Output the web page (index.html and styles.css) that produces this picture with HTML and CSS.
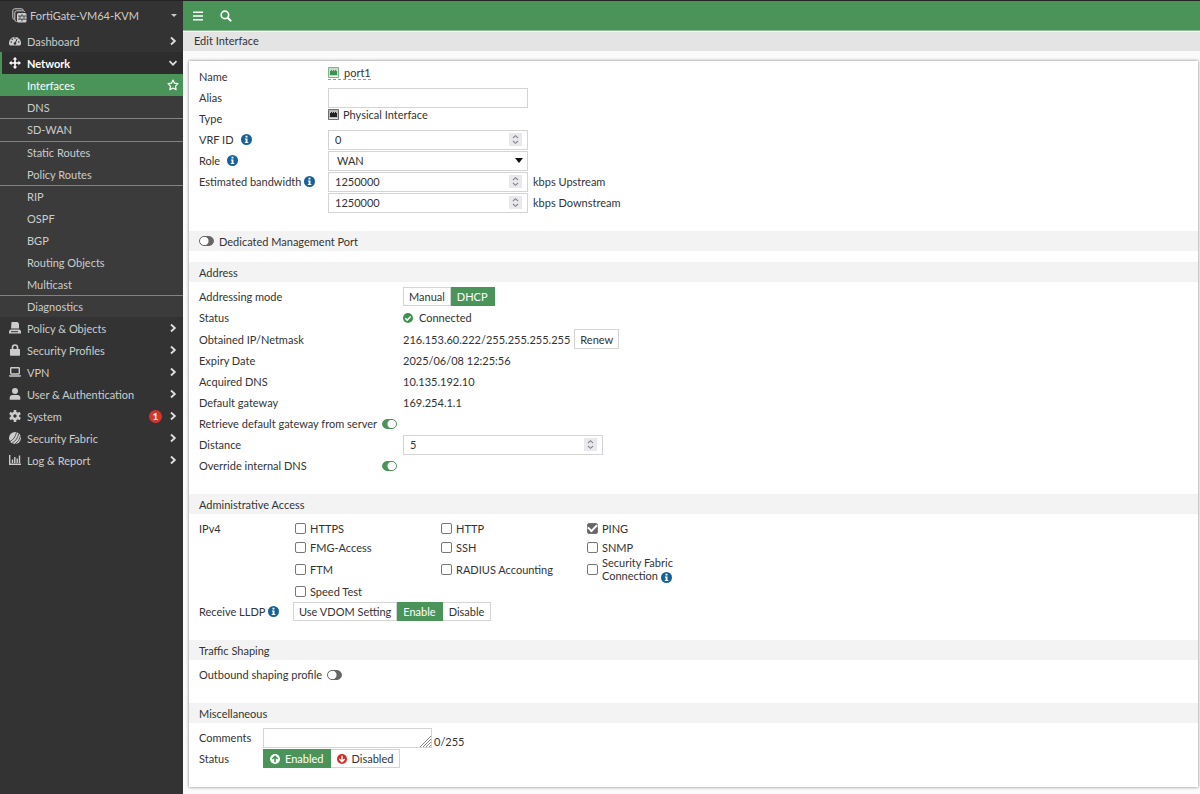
FILE: index.html
```html
<!DOCTYPE html>
<html lang="en">
<head>
<meta charset="utf-8">
<title>Edit Interface</title>
<link rel="stylesheet" href="styles.css">
</head>
<body>
<svg class="defs" aria-hidden="true">
  <symbol id="right" viewBox="0 0 10 10"><path d="M3 1.5 6.8 5 3 8.500" fill="none" stroke="currentColor" stroke-width="1.900"/></symbol>
  <symbol id="info" viewBox="0 0 10 10"><circle cx="5" cy="5" r="5" fill="#14609b"/><path d="M4.100 1.500h1.800v1.600H4.100zM3.500 4h2.400v3.200h.8v1H3.400v-1h.8V5h-.7z" fill="#fff"/></symbol>
  <symbol id="spin" viewBox="0 0 13 13"><path d="M0 0h13v13H0z" fill="#e9e9ed"/><path d="M4 5l2.500-2.300L9 5M4 8l2.500 2.300L9 8" fill="none" stroke="#85858c" stroke-width="1.100"/></symbol>
  <symbol id="port" viewBox="0 0 11 11"><path d="M.5.5h10v10H.5z" fill="currentColor" fill-opacity=".3" stroke="currentColor" stroke-opacity=".6"/><path d="M2 8V4h1V3h1v1h1V3h1v1h1V3h1v1h1v4z" fill="currentColor"/><path d="M1 9h9v1H1z" fill="#fff" fill-opacity=".6"/></symbol>
</svg>
<div class="app">
  <nav class="sidebar" aria-label="Main">
    <button class="device" type="button">
      <svg class="device-icon" viewBox="0 0 15 15" fill="none" stroke="currentColor"><path d="M2.500 11.500A2 2 0 0 1 .8 9.500V2.800a2 2 0 0 1 2-2h6.700a2 2 0 0 1 1.800 1.300"/><path d="M4.500 13.500A2 2 0 0 1 2.800 11.500V4.800a2 2 0 0 1 2-2H11a2 2 0 0 1 1.800 1"/><rect x="5" y="5" width="9.500" height="9.500" rx="1.500" fill="currentColor" stroke="none"/><path d="M6 8h8.500M6 11.200h8.500M10 6v2M8 8v3M12 8v3M10 11v2.500" stroke="#333" stroke-width=".8"/></svg>
      <span>FortiGate-VM64-KVM</span>
      <svg class="caret" viewBox="0 0 6 3"><path d="M0 0h6L3 3z" fill="currentColor"/></svg>
    </button>
    <ul class="menu">
      <li><a class="item" href="#dashboard"><svg class="ico" viewBox="0 0 12 12"><path d="M.3 9.800A6 6 0 1 1 11.700 9.800q-.2.700-1 .700H1.300q-.8 0-1-.700z" fill="currentColor"/><g fill="#333"><circle cx="2.200" cy="7" r=".8"/><circle cx="3.300" cy="4.200" r=".8"/><circle cx="6" cy="3" r=".8"/><circle cx="9.800" cy="7" r=".8"/><circle cx="6" cy="8.500" r="1.300"/></g><path d="M6 8.500 8.200 3.900" stroke="#333"/></svg><span>Dashboard</span><svg class="chev"><use href="#right"/></svg></a></li>
      <li>
        <a class="item open" href="#network"><svg class="ico" viewBox="0 0 12 12"><path d="M6 0 8.300 2.600H6.800v2.600h2.600V3.700L12 6 9.400 8.300V6.800H6.800v2.600h1.500L6 12 3.700 9.400h1.500V6.800H2.600v1.500L0 6l2.600-2.300v1.500h2.600V2.600H3.700z" fill="currentColor"/></svg><span>Network</span><svg class="chev" viewBox="0 0 10 10"><path d="M1.500 3.200 5 6.700 8.500 3.200" fill="none" stroke="currentColor" stroke-width="1.700"/></svg></a>
        <div class="submenu">
          <ul class="group">
            <li><a class="sub active" href="#interfaces"><span>Interfaces</span><svg class="star" viewBox="0 0 12 12"><path d="M6 1 7.500 4.200l3.500.5L8.500 7.200l.6 3.500L6 9 2.900 10.700l.6-3.500L1 4.700l3.500-.5z" fill="none" stroke="#fff" stroke-width="1.200" stroke-linejoin="round"/></svg></a></li>
            <li><a class="sub" href="#dns">DNS</a></li>
          </ul>
          <ul class="group"><li><a class="sub" href="#sdwan">SD-WAN</a></li></ul>
          <ul class="group">
            <li><a class="sub" href="#static">Static Routes</a></li>
            <li><a class="sub" href="#policy-routes">Policy Routes</a></li>
          </ul>
          <ul class="group">
            <li><a class="sub" href="#rip">RIP</a></li>
            <li><a class="sub" href="#ospf">OSPF</a></li>
            <li><a class="sub" href="#bgp">BGP</a></li>
            <li><a class="sub" href="#routing">Routing Objects</a></li>
            <li><a class="sub" href="#multicast">Multicast</a></li>
          </ul>
          <ul class="group"><li><a class="sub" href="#diagnostics">Diagnostics</a></li></ul>
        </div>
      </li>
      <li><a class="item" href="#policy"><svg class="ico" viewBox="0 0 12 12" fill="currentColor"><path d="M2.500 0H8.500L10 1.500V6.500H2z"/><path d="M1.500 7.500h9L12 9v2.500H0V9z"/><path d="M2 9.200h7v1H2z" fill="#333"/></svg><span>Policy &amp; Objects</span><svg class="chev"><use href="#right"/></svg></a></li>
      <li><a class="item" href="#profiles"><svg class="ico" viewBox="0 0 12 12"><path d="M1.500 5h9q.5 0 .5.500v5.500q0 .8-.8.800H1.800q-.8 0-.8-.800V5.500q0-.5.5-.5z" fill="currentColor"/><path d="M3.500 5.500V3.500a2.500 2.500 0 0 1 5 0v2" fill="none" stroke="currentColor" stroke-width="1.600"/></svg><span>Security Profiles</span><svg class="chev"><use href="#right"/></svg></a></li>
      <li><a class="item" href="#vpn"><svg class="ico" viewBox="0 0 12 12"><rect x="1.700" y="1.700" width="8.600" height="6.300" rx=".7" fill="none" stroke="currentColor" stroke-width="1.400"/><path d="M0 9.200h12v.6q0 1-1 1H1q-1 0-1-1z" fill="currentColor"/></svg><span>VPN</span><svg class="chev"><use href="#right"/></svg></a></li>
      <li><a class="item" href="#user"><svg class="ico" viewBox="0 0 12 12" fill="currentColor"><circle cx="6" cy="3" r="3"/><path d="M.7 11.800V10Q.7 7 3.500 7h5q2.800 0 2.800 3v1.800z"/></svg><span>User &amp; Authentication</span><svg class="chev"><use href="#right"/></svg></a></li>
      <li><a class="item" href="#system"><svg class="ico" viewBox="0 0 12 12"><circle cx="6" cy="6" r="3" fill="none" stroke="currentColor" stroke-width="2.600"/><path d="M6 0v3M6 9v3M.8 3l2.600 1.500M8.600 7.500 11.200 9M.8 9l2.600-1.500M8.600 4.500 11.200 3" stroke="currentColor" stroke-width="2.600"/></svg><span>System</span><b class="badge">1</b><svg class="chev"><use href="#right"/></svg></a></li>
      <li><a class="item" href="#fabric"><svg class="ico" viewBox="0 0 12 12"><circle cx="6" cy="6" r="6" fill="currentColor"/><path d="M1 9.500Q6 7 7.500.3M3 11.200Q8.500 8 9.700 1.500M6 12Q10.500 9 11.500 4" fill="none" stroke="#333" stroke-width=".8"/></svg><span>Security Fabric</span><svg class="chev"><use href="#right"/></svg></a></li>
      <li><a class="item" href="#log"><svg class="ico" viewBox="0 0 12 12" fill="none" stroke="currentColor"><path d="M.7 1v9.300H12" stroke-width="1.400"/><path d="M3.500 5.500V9M5.800 3V9M8.200 4.500V9M10.500 1.500V9" stroke-width="1.400"/></svg><span>Log &amp; Report</span><svg class="chev"><use href="#right"/></svg></a></li>
    </ul>
  </nav>
  <div class="content">
    <header class="topbar">
      <button type="button" aria-label="Toggle menu"><svg viewBox="0 0 12 12"><path d="M1 2.200h10M1 6h10M1 9.800h10" stroke="#fff" stroke-width="1.600"/></svg></button>
      <button type="button" aria-label="Search"><svg viewBox="0 0 12 12" fill="none" stroke="#fff"><circle cx="4.900" cy="4.900" r="3.700" stroke-width="1.700"/><path d="m7.700 7.700 3.500 3.500" stroke-width="2"/></svg></button>
    </header>
    <h1 class="title">Edit Interface</h1>
    <form class="card">
      <section class="body general">
        <div class="row"><span class="label">Name</span><a class="portlink" href="#port1"><svg class="port green"><use href="#port"/></svg>port1</a></div>
        <div class="row"><label class="label" for="alias">Alias</label><input class="box" id="alias" type="text"></div>
        <div class="row"><span class="label">Type</span><span class="porttype"><svg class="port"><use href="#port"/></svg>Physical Interface</span></div>
        <div class="row"><label class="label wide" for="vrf">VRF ID <svg class="info"><use href="#info"/></svg></label><span class="field"><input class="box" id="vrf" type="number" value="0"><svg class="spin"><use href="#spin"/></svg></span></div>
        <div class="row"><label class="label wide" for="role">Role <svg class="info"><use href="#info"/></svg></label><span class="field"><select class="box" id="role"><option>WAN</option></select><svg class="drop" viewBox="0 0 8 5"><path d="M0 0h8L4 5z" fill="#111"/></svg></span></div>
        <div class="row"><label class="label" for="up">Estimated bandwidth <svg class="info"><use href="#info"/></svg></label><span class="field"><input class="box" id="up" type="number" value="1250000"><svg class="spin"><use href="#spin"/></svg></span><span class="unit">kbps Upstream</span></div>
        <div class="row"><span class="label"></span><span class="field"><input class="box" type="number" value="1250000" aria-label="Downstream bandwidth"><svg class="spin"><use href="#spin"/></svg></span><span class="unit">kbps Downstream</span></div>
      </section>
      <h2 class="bar dedicated"><label><input class="toggle" type="checkbox">Dedicated Management Port</label></h2>
      <h2 class="bar">Address</h2>
      <section class="body address">
        <div class="row"><span class="label">Addressing mode</span><span class="seg"><button type="button">Manual</button><button class="on" type="button">DHCP</button></span></div>
        <div class="row"><span class="label">Status</span><span class="connected"><svg viewBox="0 0 10 10"><circle cx="5" cy="5" r="5" fill="#3f9150"/><path d="m2.300 5.200 1.900 1.900 3.500-3.600" fill="none" stroke="#fff" stroke-width="1.500"/></svg>Connected</span></div>
        <div class="row"><span class="label">Obtained IP/Netmask</span><span>216.153.60.222/255.255.255.255</span><button class="renew" type="button">Renew</button></div>
        <div class="row"><span class="label">Expiry Date</span><span>2025/06/08 12:25:56</span></div>
        <div class="row"><span class="label">Acquired DNS</span><span>10.135.192.10</span></div>
        <div class="row"><span class="label">Default gateway</span><span>169.254.1.1</span></div>
        <div class="row"><label class="label switch">Retrieve default gateway from server<input class="toggle" type="checkbox" checked></label></div>
        <div class="row"><label class="label" for="distance">Distance</label><span class="field"><input class="box" id="distance" type="number" value="5"><svg class="spin"><use href="#spin"/></svg></span></div>
        <div class="row"><label class="label switch">Override internal DNS<input class="toggle" type="checkbox" checked></label></div>
      </section>
      <h2 class="bar">Administrative Access</h2>
      <section class="body admin">
        <div class="row access"><span class="label">IPv4</span>
          <div class="checks">
            <label><input type="checkbox"><span>HTTPS</span></label>
            <label><input type="checkbox"><span>HTTP</span></label>
            <label><input type="checkbox" checked><span>PING</span></label>
            <label><input type="checkbox"><span>FMG-Access</span></label>
            <label><input type="checkbox"><span>SSH</span></label>
            <label><input type="checkbox"><span>SNMP</span></label>
            <label><input type="checkbox"><span>FTM</span></label>
            <label><input type="checkbox"><span>RADIUS Accounting</span></label>
            <label><input type="checkbox"><span>Security Fabric Connection <svg class="info"><use href="#info"/></svg></span></label>
            <label><input type="checkbox"><span>Speed Test</span></label>
          </div>
        </div>
        <div class="row"><span class="label">Receive LLDP <svg class="info"><use href="#info"/></svg></span><span class="seg"><button type="button">Use VDOM Setting</button><button class="on" type="button">Enable</button><button type="button">Disable</button></span></div>
      </section>
      <h2 class="bar">Traffic Shaping</h2>
      <section class="body">
        <div class="row"><label class="inline">Outbound shaping profile<input class="toggle" type="checkbox"></label></div>
      </section>
      <h2 class="bar">Miscellaneous</h2>
      <section class="body misc">
        <div class="row"><label class="label" for="comments">Comments</label><span class="field"><textarea class="box" id="comments" rows="1"></textarea><svg class="grip" viewBox="0 0 11 11"><path d="M0 11 11 0M3 11l8-8M6 11l5-5M9 11l2-2" stroke="#777" stroke-width=".9"/></svg></span><span class="count">0/255</span></div>
        <div class="row"><span class="label">Status</span><span class="seg state"><button class="on" type="button"><svg viewBox="0 0 10 10"><circle cx="5" cy="5" r="5" fill="#fff"/><path d="M5 8.300V2.500M2.300 5 5 2.300 7.700 5" fill="none" stroke="#3f9150" stroke-width="1.500"/></svg>Enabled</button><button type="button"><svg viewBox="0 0 10 10"><circle cx="5" cy="5" r="5" fill="#d62b21"/><path d="M5 1.700v5.800M2.300 5 5 7.700 7.700 5" fill="none" stroke="#fff" stroke-width="1.500"/></svg>Disabled</button></span></div>
      </section>
    </form>
  </div>
</div>
</body>
</html>
```
FILE: styles.css
```css
* { box-sizing: border-box; }
body { margin: 0; background: #fafafa; color: #333; font: 11px/13px Lato, sans-serif; }
button, input, select, textarea { margin: 0; font: inherit; color: inherit; }
button { cursor: pointer; }
svg { flex: none; }
ul { margin: 0; padding: 0; list-style: none; }
.defs { display: none; }
.app { display: flex; min-height: 100vh; border-top: 1px solid #242424; }

.sidebar { flex: 0 0 183px; background: #333; color: #ccc; }
.device { display: flex; align-items: center; gap: 3px; width: 100%; height: 29px; padding: 0 6px 0 12px; border: 0; background: none; text-align: left; }
.device span { flex: 1; }
.device-icon { width: 15px; height: 15px; }
.caret { width: 6px; height: 3px; }
.item { display: flex; align-items: center; height: 22px; padding: 0 5px 0 9px; color: inherit; text-decoration: none; }
.item span { flex: 1; }
.ico { width: 12px; height: 12px; margin-right: 6px; }
.chev { width: 10px; height: 10px; color: #ddd; }
.open { background: #2d2d2d; box-shadow: inset 2px 0 #4a945a; color: #fff; font-weight: 700; }
.badge { width: 13px; height: 13px; margin-right: 6px; border-radius: 50%; background: #d9342b; color: #fff; text-align: center; font-size: 10px; }
.submenu { background: #3b3b3b; }
.group + .group { border-top: 1px solid #828282; }
.group + .group li:first-child .sub { height: 21px; }
.group + .group:not(:last-child) { min-height: 23px; }
.sub { display: flex; align-items: center; height: 22px; padding: 0 4px 0 27px; color: inherit; text-decoration: none; }
.sub span { flex: 1; }
.active { background: #4a945a; color: #fff; }
.star { width: 12px; height: 12px; }

.content { flex: 1; min-width: 0; }
.topbar { display: flex; align-items: center; gap: 16px; height: 30px; padding: 0 9px; background: #4a945a; border-bottom: 1px solid #8cbb96; }
.topbar button { display: flex; padding: 0; border: 0; background: none; }
.topbar svg { width: 12px; height: 12px; }
.title { margin: 1px 0 0; padding: 2px 11px 4px; background: #e4e4e4; font-size: 11px; font-weight: 400; }
.card { margin: 10px 2px 6px 6px; padding-top: 1px; background: #fff; box-shadow: 0 0 3px rgba(0, 0, 0, .5); }
.body { padding: 4px 10px 18px; }
.bar { display: flex; align-items: center; height: 20px; margin: 0; padding: 0 10px; background: #f3f3f3; font-size: 11px; font-weight: 400; }
.dedicated { margin-bottom: 11px; }
.bar label, .inline { display: flex; align-items: center; gap: 5px; }

.row { display: flex; align-items: center; min-height: 21px; }
.label { display: flex; align-items: center; gap: 3px; flex: none; width: 129px; }
.wide { gap: 7px; }
.info { width: 11px; height: 11px; }
.address .label { width: 204px; }
.address .switch { justify-content: space-between; width: 198px; }
.admin .label { width: 94px; }
.misc .label { width: 64px; }
.box { width: 200px; height: 20px; padding: 0 6px; border: 1px solid #d4d4d4; border-radius: 0; background: #fff; outline: 0; appearance: none; }
input[type="number"] { appearance: textfield; }
select.box { padding-left: 8px; }
.field { display: grid; align-items: center; justify-items: end; }
.field > * { grid-area: 1 / 1; }
.field svg { pointer-events: none; }
.spin { width: 13px; height: 13px; margin-right: 6px; }
.drop { width: 8px; height: 5px; margin-right: 5px; }
.unit { margin-left: 5px; }
.port { width: 11px; height: 11px; color: #222; }
.green { color: #3f9150; }
.portlink, .porttype { display: flex; align-items: center; align-self: flex-start; }
.portlink { gap: 5px; color: inherit; text-decoration: none; border-bottom: 1px dashed #999; }
.porttype { gap: 4px; }

.seg { display: flex; }
.seg button, .renew { height: 19px; padding: 0 5px; border: 1px solid #d4d4d4; background: #fff; }
.seg button + button { border-left: 0; padding: 0 6px; }
.seg .on { background: #4a945a; border-color: #4a945a; color: #fff; }
.renew { margin: 1px 0 1px 4px; height: 20px; }
.connected { display: flex; align-items: center; gap: 6px; }
.connected svg, .state svg { width: 10px; height: 10px; }
.state button { display: flex; align-items: center; gap: 5px; padding: 0 6px; }

.toggle { width: 15px; height: 10px; border: 1px solid #666; border-radius: 5px; appearance: none; background: radial-gradient(circle at 4px 4px, #fff 0 4px, #666 5px); }
.toggle:checked { border-color: #4a945a; background: radial-gradient(circle at 9px 4px, #fff 0 4px, #4a945a 5px); }

.access { align-items: flex-start; }
.access > .label { height: 20px; }
.checks { display: grid; grid-template-columns: repeat(3, 146px); grid-template-rows: 20px 18px auto 19px; padding-left: 2px; }
.checks label { display: flex; align-items: center; gap: 4px; padding-right: 50px; white-space: nowrap; }
.checks label:nth-child(3n) { white-space: normal; }
.checks .info { vertical-align: -2px; height: 11px; margin-block: -1px; }
.checks input { flex: none; width: 11px; height: 11px; border: 1px solid #777; border-radius: 2px; appearance: none; background: #fff; }
.checks input:checked { background: #666; display: grid; place-items: center; }
.checks input:checked::before { content: ""; width: 7px; height: 4px; border: solid #fff; border-width: 0 0 2px 2px; transform: rotate(-45deg); margin-bottom: 2px; }

.misc .box { display: block; width: 169px; resize: none; }
.grip { width: 11px; height: 11px; margin-right: 1px; align-self: end; margin-bottom: 1px; }
.count { align-self: flex-end; margin-left: 2px; }
```
